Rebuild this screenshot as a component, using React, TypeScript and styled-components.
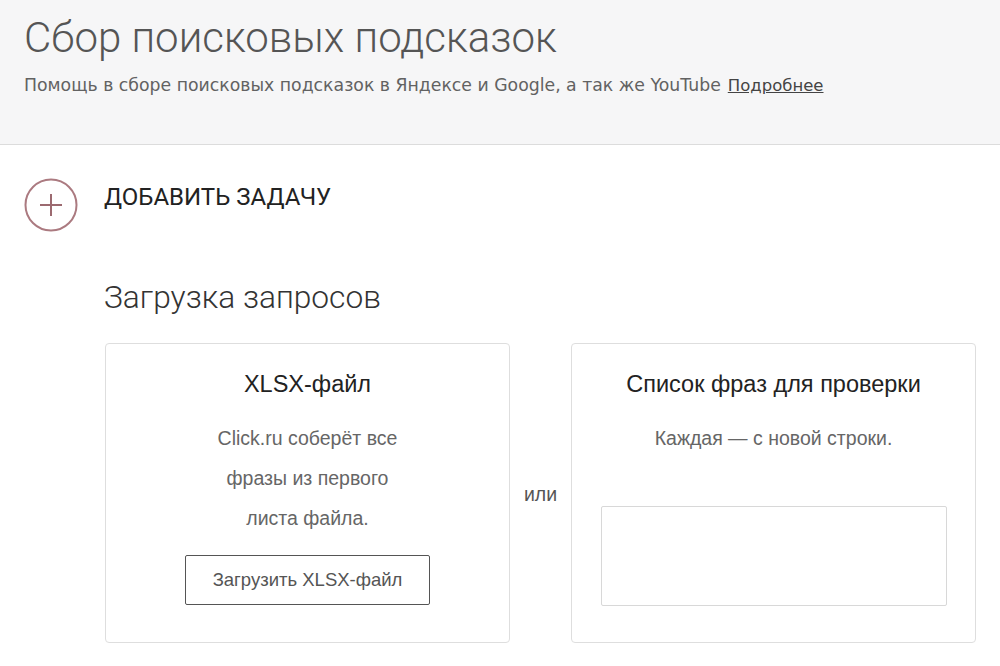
import styled, { createGlobalStyle } from "styled-components";

const GlobalStyle = createGlobalStyle`
  html, body {
    margin: 0;
    padding: 0;
    background: #fff;
  }
  body {
    font-family: "Liberation Sans", Arial, sans-serif;
  }
`;

const Page = styled.div`
  width: 1000px;
  height: 666px;
  overflow: hidden;
`;

const Header = styled.header`
  height: 145px;
  background: #f6f6f7;
  border-bottom: 1px solid #dcdcdc;
  padding: 13px 0 0 24px;
  box-sizing: border-box;
`;

const Title = styled.h1`
  margin: 0;
  font-family: Roboto, "Liberation Sans", sans-serif;
  font-weight: 300;
  font-size: 42px;
  line-height: 50px;
  color: #555;
`;

const Subtitle = styled.p`
  margin: 10px 0 0;
  font-family: "DejaVu Sans", Verdana, sans-serif;
  font-size: 17.3px;
  line-height: 24px;
  color: #626262;
`;

const MoreLink = styled.a`
  color: #444;
  text-decoration: underline;
  margin-left: 7px;
  font-size: 16.5px;
`;

const Content = styled.main`
  padding: 33px 0 0 24px;
`;

const AddTask = styled.div`
  display: flex;
  align-items: center;
  gap: 26px;
  cursor: pointer;
`;

const PlusCircle = styled.span`
  display: flex;
  width: 54px;
  height: 54px;
`;

const AddLabel = styled.span`
  font-family: Roboto, "Liberation Sans", sans-serif;
  font-size: 24px;
  line-height: 30px;
  color: #222;
  margin-top: -16px;
`;

const Section = styled.section`
  padding-left: 80px;
  margin-top: 48px;
`;

const SectionTitle = styled.h2`
  margin: 0;
  font-family: Roboto, "Liberation Sans", sans-serif;
  font-weight: 300;
  font-size: 31.7px;
  line-height: 36px;
  color: #333;
`;

const Row = styled.div`
  display: flex;
  align-items: stretch;
  margin-top: 27px;
  padding-left: 1px;
`;

const Card = styled.div`
  width: 405px;
  height: 300px;
  box-sizing: border-box;
  border: 1px solid #dedede;
  border-radius: 4px;
  display: flex;
  flex-direction: column;
  align-items: center;
  padding-top: 26px;
`;

const CardTitle = styled.h3`
  margin: 0;
  font-weight: 400;
  font-size: 23.5px;
  line-height: 28px;
  color: #222;
`;

const CardText = styled.p<{ $wide?: boolean }>`
  margin: 20px 0 0;
  width: ${(p) => (p.$wide ? "auto" : "204px")};
  text-align: center;
  font-size: 19.5px;
  line-height: 40px;
  color: #666;
`;

const UploadButton = styled.button`
  margin-top: 17px;
  width: 245px;
  height: 50px;
  background: #fff;
  border: 1px solid #555;
  border-radius: 2px;
  font-family: "Liberation Sans", Arial, sans-serif;
  font-size: 18.5px;
  color: #555;
  cursor: pointer;
`;

const Or = styled.div`
  width: 61px;
  display: flex;
  align-items: center;
  justify-content: center;
  font-size: 19.5px;
  color: #555;
  padding-top: 2px;
`;

const Phrases = styled.textarea`
  margin-top: 48px;
  width: 346px;
  height: 100px;
  box-sizing: border-box;
  border: 1px solid #d8d8d8;
  border-radius: 2px;
  resize: none;
  outline: none;
`;

export default function App() {
  return (
    <Page>
      <GlobalStyle />
      <Header>
        <Title>Сбор поисковых подсказок</Title>
        <Subtitle>
          Помощь в сборе поисковых подсказок в Яндексе и Google, а так же YouTube
          <MoreLink href="#">Подробнее</MoreLink>
        </Subtitle>
      </Header>
      <Content>
        <AddTask>
          <PlusCircle>
            <svg width="54" height="54" viewBox="0 0 54 54">
              <circle cx="27" cy="27" r="25.5" fill="none" stroke="#ab7a80" strokeWidth="2" />
              <path d="M16 27h22M27 16v22" stroke="#9c6a70" strokeWidth="2" />
            </svg>
          </PlusCircle>
          <AddLabel>ДОБАВИТЬ ЗАДАЧУ</AddLabel>
        </AddTask>
        <Section>
          <SectionTitle>Загрузка запросов</SectionTitle>
          <Row>
            <Card>
              <CardTitle>XLSX-файл</CardTitle>
              <CardText>Click.ru соберёт все фразы из первого листа файла.</CardText>
              <UploadButton>Загрузить XLSX-файл</UploadButton>
            </Card>
            <Or>или</Or>
            <Card>
              <CardTitle>Список фраз для проверки</CardTitle>
              <CardText $wide>Каждая — с новой строки.</CardText>
              <Phrases />
            </Card>
          </Row>
        </Section>
      </Content>
    </Page>
  );
}
